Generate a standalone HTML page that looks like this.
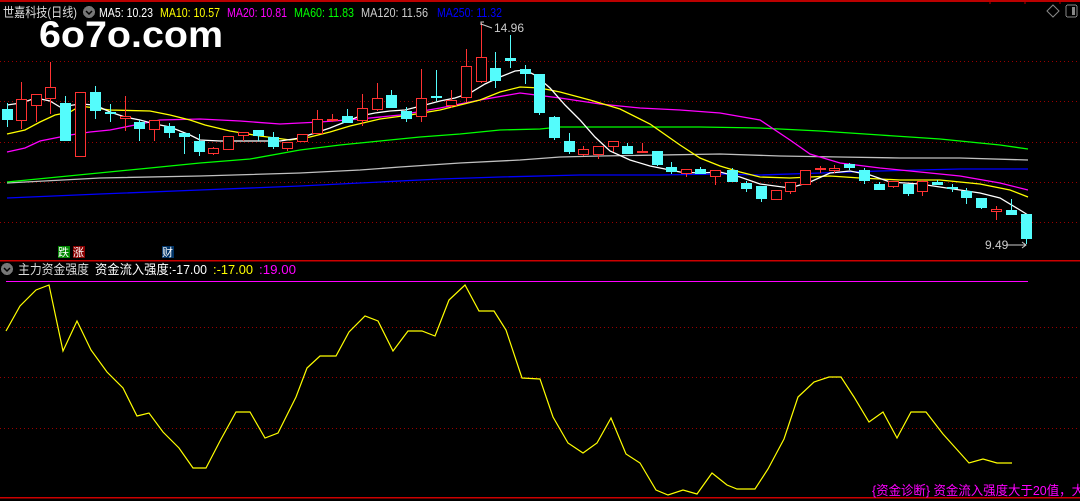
<!DOCTYPE html>
<html><head><meta charset="utf-8"><style>
html,body{margin:0;padding:0;background:#000;width:1080px;height:501px;overflow:hidden}
svg{display:block}
text{font-family:"Liberation Sans","Noto Sans CJK SC",sans-serif}
</style></head><body>
<svg width="1080" height="501" viewBox="0 0 1080 501" xmlns="http://www.w3.org/2000/svg" shape-rendering="crispEdges">
<rect width="1080" height="501" fill="#000"/>
<line x1="0" y1="1" x2="1080" y2="1" stroke="#b00" stroke-width="2"/>
<g stroke="#b00"><line x1="990" y1="0" x2="990" y2="4"/><line x1="1025" y1="0" x2="1025" y2="4"/><line x1="1060" y1="0" x2="1060" y2="4"/></g>
<g stroke="#900" stroke-dasharray="1 3">
<line x1="0" y1="61.5" x2="1080" y2="61.5"/><line x1="0" y1="101.5" x2="1080" y2="101.5"/><line x1="0" y1="142.5" x2="1080" y2="142.5"/><line x1="0" y1="182.5" x2="1080" y2="182.5"/><line x1="0" y1="222.5" x2="1080" y2="222.5"/>
<line x1="0" y1="327.5" x2="1080" y2="327.5"/><line x1="0" y1="377.5" x2="1080" y2="377.5"/><line x1="0" y1="428.5" x2="1080" y2="428.5"/>
</g>
<line x1="0" y1="260.5" x2="1080" y2="260.5" stroke="#c00" stroke-width="1.5"/>
<line x1="0" y1="497.5" x2="1080" y2="497.5" stroke="#c00" stroke-width="1.5"/>
<rect x="6" y="281" width="1022" height="1" fill="#ff00ff"/>

<g fill="none" stroke-width="1.3" shape-rendering="auto">
<polyline stroke="#0000ff" points="7,198 100,194 200,190 300,186 380,182 440,179 500,177 580,175 660,175 720,174 760,175 820,173 880,171 960,169 1028,169"/>
<polyline stroke="#c0c0c0" points="7,183 100,178 200,176 300,173 360,170 400,167 460,163 520,160 560,157 600,156 720,154 780,156 840,157 900,158 960,158 1028,160"/>
<polyline stroke="#00ff00" points="7,182 150,168 200,163 250,159 300,150 340,145 380,141 420,137 460,134 500,130 540,129 560,127 600,127 700,127 760,128 820,131 880,135 940,139 1000,145 1028,149"/>
<polyline stroke="#ff00ff" points="7,152 25,148 40,141 55,138 70,135 90,132 110,130 140,124 160,120 200,119 240,121 280,124 320,122 360,119 400,115 440,108 480,100 520,93 560,98 600,104 640,108 680,110 720,113 760,120 790,140 810,154 840,163 880,168 920,172 960,176 1000,183 1028,190"/>
<polyline stroke="#ffff00" points="7,134 25,130 40,122 55,115 70,112 80,106 95,108 110,110 150,111 170,115 190,120 205,125 230,131 260,136 290,140 310,137 330,132 350,126 380,119 410,115 440,110 480,100 500,92 520,87 540,88 560,92 590,100 620,109 650,124 680,145 700,158 720,166 740,172 760,177 790,178 830,176 860,178 900,180 940,180 980,184 1010,190 1028,197"/>
<polyline stroke="#ffffff" points="7,105 21,103 36,98 50,101 60,107 80,104 95,105 110,112 125,117 140,120 155,124 170,127 190,135 200,140 220,141 250,141 280,141 300,138 315,133 330,128 345,122 360,116 375,113 390,111 405,110 425,105 440,101 455,98 470,93 485,84 500,77 515,71 525,70 535,75 550,88 565,105 580,120 595,137 610,151 630,160 650,166 680,172 700,173 720,172 740,177 760,184 790,188 810,182 830,173 850,171 870,175 890,182 920,184 940,187 960,190 980,193 1000,198 1020,210 1028,215"/>
</g>

<path stroke="#ff3232" fill="none" d="M21.5 82V129M36.5 94V122M50.5 62V114M125.5 96V131M154.5 120V141M213.5 147V155M243.5 132V141M287.5 142V151M317.5 110V134M332.5 114V122M362.5 94V126M377.5 83V111M421.5 69V122M451.5 90V108M466.5 49V102M481.5 23V83M583.5 146V156M598.5 146V159M613.5 141V152M642.5 143V153M686.5 169V177M715.5 170V185M790.5 182V194M820.5 166V173M834.5 165V173M893.5 181V188M922.5 180V196M996.5 206V220"/>
<g fill="#000" stroke="#ff3232">
<rect x="16.5" y="99.5" width="10" height="21"/><rect x="31.5" y="94.5" width="10" height="11"/><rect x="45.5" y="87.5" width="10" height="11"/><rect x="75.5" y="92.5" width="10" height="64"/><rect x="120.5" y="116.5" width="10" height="2"/><rect x="149.5" y="120.5" width="10" height="9"/><rect x="208.5" y="148.5" width="10" height="5"/><rect x="223.5" y="136.5" width="10" height="13"/><rect x="238.5" y="132.5" width="10" height="3"/><rect x="282.5" y="142.5" width="10" height="6"/><rect x="297.5" y="134.5" width="10" height="7"/><rect x="312.5" y="119.5" width="10" height="14"/><rect x="327.5" y="119.5" width="10" height="1"/><rect x="357.5" y="108.5" width="10" height="12"/><rect x="372.5" y="98.5" width="10" height="11"/><rect x="416.5" y="98.5" width="10" height="18"/><rect x="446.5" y="100.5" width="10" height="5"/><rect x="461.5" y="66.5" width="10" height="31"/><rect x="476.5" y="57.5" width="10" height="24"/><rect x="578.5" y="149.5" width="10" height="5"/><rect x="593.5" y="146.5" width="10" height="8"/><rect x="608.5" y="141.5" width="10" height="5"/><rect x="681.5" y="169.5" width="10" height="4"/><rect x="710.5" y="170.5" width="10" height="6"/><rect x="771.5" y="190.5" width="10" height="9"/><rect x="785.5" y="182.5" width="10" height="9"/><rect x="800.5" y="170.5" width="10" height="14"/><rect x="829.5" y="168.5" width="10" height="2"/><rect x="888.5" y="181.5" width="10" height="5"/><rect x="917.5" y="181.5" width="10" height="10"/><rect x="991.5" y="209.5" width="10" height="2"/>
</g>
<g fill="#ff3232"><rect x="637" y="151" width="11" height="2"/><rect x="815" y="168" width="11" height="2"/></g>

<path stroke="#54fcfc" fill="none" d="M7.5 103V127M65.5 96V141M95.5 86V119M110.5 104V122M139.5 120V141M169.5 123V138M184.5 133V154M199.5 134V156M258.5 130V141M273.5 132V149M347.5 109V123M391.5 90V108M406.5 107V122M436.5 70V101M495.5 52V88M510.5 35V68M525.5 65V84M539.5 74V115M554.5 116V140M569.5 133V154M627.5 143V154M657.5 151V166M671.5 162V174M700.5 167V174M732.5 168V182M746.5 181V192M761.5 186V202M849.5 163V170M864.5 168V184M879.5 182V190M908.5 184V196M937.5 180V185M952.5 184V192M966.5 188V204M981.5 198V209M1011.5 199V215M1026.5 214V244"/>
<g fill="#54fcfc">
<rect x="2" y="109" width="11" height="11"/><rect x="60" y="103" width="11" height="38"/><rect x="90" y="92" width="11" height="19"/><rect x="105" y="112" width="11" height="2"/><rect x="134" y="122" width="11" height="7"/><rect x="164" y="126" width="11" height="7"/><rect x="179" y="133" width="11" height="4"/><rect x="194" y="141" width="11" height="11"/><rect x="253" y="130" width="11" height="6"/><rect x="268" y="137" width="11" height="10"/><rect x="342" y="116" width="11" height="7"/><rect x="386" y="95" width="11" height="13"/><rect x="401" y="111" width="11" height="8"/><rect x="431" y="96" width="11" height="2"/><rect x="490" y="68" width="11" height="13"/><rect x="505" y="58" width="11" height="3"/><rect x="520" y="69" width="11" height="5"/><rect x="534" y="74" width="11" height="39"/><rect x="549" y="117" width="11" height="21"/><rect x="564" y="141" width="11" height="11"/><rect x="622" y="146" width="11" height="8"/><rect x="652" y="151" width="11" height="14"/><rect x="666" y="167" width="11" height="5"/><rect x="695" y="169" width="11" height="5"/><rect x="727" y="170" width="11" height="12"/><rect x="741" y="183" width="11" height="6"/><rect x="756" y="186" width="11" height="13"/><rect x="844" y="164" width="11" height="4"/><rect x="859" y="170" width="11" height="11"/><rect x="874" y="184" width="11" height="6"/><rect x="903" y="184" width="11" height="10"/><rect x="932" y="182" width="11" height="3"/><rect x="947" y="187" width="11" height="2"/><rect x="961" y="191" width="11" height="7"/><rect x="976" y="198" width="11" height="10"/><rect x="1006" y="210" width="11" height="5"/><rect x="1021" y="214" width="11" height="25"/>
</g>

<polyline fill="none" stroke="#ffff00" stroke-width="1.2" shape-rendering="auto" points="6,331 20,306 36,290 49,285 63,351 77,321 91,350 107,372 123,388 137,416 149,413 163,432 179,448 193,468 206,468 220,441 236,412 250,412 265,438 278,433 296,397 307,368 320,356 336,356 349,332 365,316 378,321 393,351 408,331 422,331 435,336 449,300 465,285 479,311 494,311 506,330 522,378 540,379 553,417 568,443 583,453 597,443 611,418 626,454 640,463 656,490 668,495 683,490 697,494 712,473 727,485 737,489 755,489 768,469 784,439 798,397 814,382 829,377 841,377 854,397 869,422 883,412 897,438 911,412 926,412 943,434 969,463 983,459 997,463 1012,463"/>

<text x="3" y="17" font-size="13" fill="#ddd" textLength="74" lengthAdjust="spacingAndGlyphs">世嘉科技(日线)</text>
<circle cx="89" cy="12" r="6" fill="#777"/>
<path d="M86 11 L89 14 L92 11" stroke="#000" stroke-width="1.5" fill="none" shape-rendering="auto"/>
<g font-size="13">
<text x="99" y="17" fill="#fff" textLength="54" lengthAdjust="spacingAndGlyphs">MA5: 10.23</text>
<text x="160" y="17" fill="#ff0" textLength="60" lengthAdjust="spacingAndGlyphs">MA10: 10.57</text>
<text x="227" y="17" fill="#f0f" textLength="60" lengthAdjust="spacingAndGlyphs">MA20: 10.81</text>
<text x="294" y="17" fill="#0f0" textLength="60" lengthAdjust="spacingAndGlyphs">MA60: 11.83</text>
<text x="361" y="17" fill="#ccc" textLength="67" lengthAdjust="spacingAndGlyphs">MA120: 11.56</text>
<text x="437" y="17" fill="#00f" textLength="65" lengthAdjust="spacingAndGlyphs">MA250: 11.32</text>
</g>
<text x="39" y="47" font-size="37" font-weight="bold" fill="#fff" textLength="184" lengthAdjust="spacingAndGlyphs">6o7o.com</text>
<path d="M1053 5 L1059 11 L1053 17 L1047 11 Z" stroke="#888" fill="none" shape-rendering="auto"/>
<rect x="1066" y="5" width="11" height="12" rx="2" stroke="#888" fill="none"/><rect x="1072" y="7" width="3" height="8" fill="#888"/>
<path d="M481 25 L481 22 L484 22 M481 24 L492 28" stroke="#ccc" fill="none" shape-rendering="auto"/>
<text x="494" y="32" font-size="12" fill="#ccc">14.96</text>
<text x="985" y="249" font-size="12" fill="#ccc">9.49</text>
<path d="M1006 245 L1026 245 M1022 242 L1026 245 L1022 248" stroke="#ccc" fill="none" shape-rendering="auto"/>
<rect x="58" y="246" width="12" height="12" fill="#080"/><text x="58" y="256" font-size="11" fill="#fff">跌</text>
<rect x="73" y="246" width="12" height="12" fill="#800"/><text x="73" y="256" font-size="11" fill="#fff">涨</text>
<rect x="162" y="246" width="12" height="12" fill="#036"/><text x="162" y="256" font-size="11" fill="#fff">财</text>
<circle cx="7" cy="269" r="6" fill="#777"/>
<path d="M4 268 L7 271 L10 268" stroke="#000" stroke-width="1.5" fill="none" shape-rendering="auto"/>
<g font-size="13">
<text x="18" y="274" fill="#ddd" textLength="71" lengthAdjust="spacingAndGlyphs">主力资金强度</text>
<text x="95" y="274" fill="#fff" textLength="112" lengthAdjust="spacingAndGlyphs">资金流入强度:-17.00</text>
<text x="213" y="274" fill="#ff0" textLength="40" lengthAdjust="spacingAndGlyphs">:-17.00</text>
<text x="259" y="274" fill="#f0f" textLength="37" lengthAdjust="spacingAndGlyphs">:19.00</text>
<text x="872" y="495" fill="#f0f" textLength="212" lengthAdjust="spacingAndGlyphs">{资金诊断} 资金流入强度大于20值，大</text>
</g>
</svg>
</body></html>
